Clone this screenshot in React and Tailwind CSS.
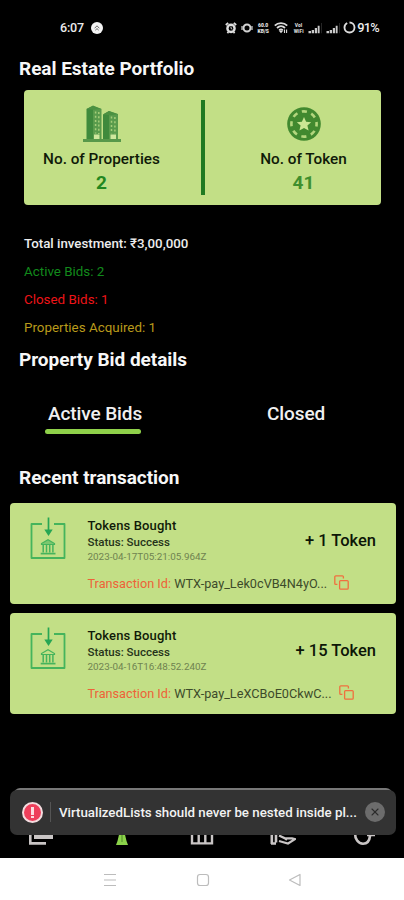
import { X } from 'lucide-react';

const transactions = [
  { id: 'WTX-pay_Lek0cVB4N4yO...', date: '2023-04-17T05:21:05.964Z', amount: '+ 1 Token', filled: true },
  { id: 'WTX-pay_LeXCBoE0CkwC...', date: '2023-04-16T16:48:52.240Z', amount: '+ 15 Token', filled: false },
];

function AlarmIcon() {
  return (
    <svg viewBox="0 0 12 12" className="w-3 h-3 shrink-0" fill="none" stroke="#dedede">
      <circle cx="6" cy="6.4" r="3.6" strokeWidth="2.4" />
      <path d="M.8 3 3.2.9M11.2 3 8.800.9M2.400 11.200l1-1.200M9.600 11.200l-1-1.200" strokeWidth="1.8" />
      <path d="M6 4.600v1.900l1.400.7" strokeWidth="0.9" />
    </svg>
  );
}

function SignalIcon() {
  return (
    <svg viewBox="0 0 14 12" className="w-[14px] h-3 shrink-0" fill="#cacaca">
      <path d="M.5 9H3v2.200H.5zM3.700 8H6v3.200H3.700zM6.800 6H9v5.200H6.800zM9.700 3.800h1.900v7.400H9.700z" />
      <path d="M13.100 1h.8v10.200h-.8z" fill="#303030" />
    </svg>
  );
}

function StatusBar() {
  return (
    <div className="h-[55px] shrink-0 flex items-center justify-between pl-[60px] pr-[25px] text-[#ececec]">
      <div className="flex items-center gap-[7px]">
        <span className="text-[12.5px] leading-4 font-medium tracking-[-0.2px]">6:07</span>
        <svg viewBox="0 0 12 12" className="w-3 h-3">
          <circle cx="6" cy="6" r="6" fill="#f4f4f4" />
          <path d="M3.600 6.300 6 3.800l2.400 2.500M4.300 8.200 6 6.600l1.700 1.600" fill="none" stroke="#6a6a6a" strokeWidth="1" />
        </svg>
      </div>
      <div className="flex items-center">
        <AlarmIcon />
        <svg viewBox="0 0 12 12" className="w-3 h-3 ml-1" fill="none" stroke="#d2d2d2">
          <circle cx="6" cy="6" r="3.500" strokeWidth="2" />
          <path d="M1 4v4M11 4v4" strokeWidth="1.200" />
        </svg>
        <div className="ml-[3px] w-[14px] h-3 flex flex-col text-[5px] leading-[6px] font-black text-center text-[#e4e4e4]">
          <span>60.0</span>
          <span>KB/S</span>
        </div>
        <svg viewBox="0 0 14 12" className="w-[14px] h-3 ml-1" fill="none" stroke="#dcdcdc" strokeWidth="1.8">
          <path d="M.8 3.600C4 .4 10 .4 13.200 3.600M3 6c2.400-2.400 5.600-2.400 8 0M5.200 8.200c1.200-1.100 2.400-1.100 3.600 0" />
          <path d="M7 10.400 5.800 9h2.400zM10.500 7.500v3.500M12.600 7.500v3.500" strokeWidth="1.100" />
        </svg>
        <div className="ml-[4px] w-[13px] h-3 flex flex-col text-[5px] leading-[6px] font-black text-center text-[#cfcfcf]">
          <span>VoI</span>
          <span>WiFi</span>
        </div>
        <span className="ml-[3px] flex"><SignalIcon /></span>
        <span className="ml-[4px] flex"><SignalIcon /></span>
        <svg viewBox="0 0 14 14" className="w-[13px] h-[13px] ml-[3px]" fill="none">
          <circle cx="7" cy="7" r="5.400" stroke="#dcdcdc" strokeWidth="2" strokeDasharray="30.500 3.400" transform="rotate(-90 7 7)" />
        </svg>
        <span className="ml-px text-[12.8px] leading-4 font-medium tracking-[-0.7px]">91%</span>
      </div>
    </div>
  );
}

function BuildingsIcon() {
  return (
    <svg viewBox="0 0 38 38" className="w-[38px] h-[38px]">
      <path d="M0 34h38v3H0z" fill="#57984a" />
      <path d="M3.500 4 10 1v33H3.500z" fill="#3f8a3c" />
      <path d="M10 1l8.500 3V34H10z" fill="#599b4c" />
      <path d="M3.500 4 10 .5 18.500 4 11 4.800z" fill="#4b9142" />
      <path d="M20 9.500 26 6v28h-6z" fill="#3f8a3c" />
      <path d="M26 6l9 3v25h-9z" fill="#599b4c" />
      <path d="M20 9.500 26 6l9 3.200-8 1z" fill="#4b9142" />
      <path d="M12.600 6.500v22M15.800 7v22" stroke="#a5cd79" strokeWidth="1.500" strokeDasharray="2 2.200" />
      <path d="M28.500 11.500v17M31.900 12v17" stroke="#a5cd79" strokeWidth="1.500" strokeDasharray="2 2.200" />
      <path d="M11 29.500h5.500V34H11zM27.500 29.500H33V34h-5.500z" fill="#cfe79d" />
    </svg>
  );
}

function TokenIcon() {
  return (
    <svg viewBox="0 0 34 34" className="w-[34px] h-[34px] mt-0.5">
      <circle cx="17" cy="17" r="16.800" fill="#41892f" />
      <circle cx="17" cy="17" r="12.600" fill="none" stroke="#b3d67d" strokeWidth="2.600" strokeDasharray="5.200 4.696" strokeDashoffset="2.600" />
      <path d="m17 10 2.100 4.700 5.100.5-3.800 3.400 1.200 5-4.600-2.600-4.600 2.600 1.200-5-3.800-3.400 5.100-.5z" fill="#cbe694" />
    </svg>
  );
}

function DepositIcon({ filled }) {
  return (
    <svg viewBox="0 0 36 43" className="w-9 h-[43px] shrink-0" fill="none" stroke="#45b45c">
      <path d="M12 7H1.500v34h33V7H24" strokeWidth="1.800" strokeLinejoin="round" />
      <path d="M18.500.5v14" stroke="#27a654" strokeWidth="1.700" />
      <path d="M14.300 12.500h8.400L18.500 19z" fill="#27a654" stroke="none" />
      <path d="M11.500 27.500v-1l6.500-3.700 6.500 3.700v1z" strokeWidth="1.200" fill={filled ? '#7cc76e' : 'none'} />
      <path d="M13.200 28v7.500M16.500 28v7.500M19.700 28v7.500M22.900 28v7.500" strokeWidth="1.500" />
      <path d="M10.700 36.600h14.800" strokeWidth="1.700" />
    </svg>
  );
}

function CopyIcon() {
  return (
    <svg viewBox="0 0 15 15" className="w-[15px] h-[15px] shrink-0" fill="none" stroke="#f0703f" strokeWidth="1.300">
      <rect x="5.600" y="5.600" width="8.600" height="8.600" rx="1" />
      <path d="M3.400 9.400H1.800a1 1 0 0 1-1-1V1.800a1 1 0 0 1 1-1h6.600a1 1 0 0 1 1 1v1.600" />
    </svg>
  );
}

function Stat({ icon, label, value, className, valueClass }) {
  return (
    <div className={`flex-1 flex flex-col items-center pt-[15px] ${className}`}>
      <div className="h-[44px]">{icon}</div>
      <p className="text-[15.300px] leading-5 font-medium text-[#0f1a08] whitespace-nowrap">{label}</p>
      <p className={`mt-1 text-[19px] leading-5 font-bold ${valueClass}`}>{value}</p>
    </div>
  );
}

function SectionTitle({ className, children }) {
  return (
    <h2 className={`ml-[19px] h-7 shrink-0 text-[19px] leading-7 font-bold tracking-[-0.030px] text-[#f7f7f7] whitespace-nowrap ${className}`}>
      {children}
    </h2>
  );
}

function TransactionCard({ tx }) {
  return (
    <div className="h-[101px] shrink-0 rounded-[4px] bg-[#c2df86] flex pl-5 pr-5">
      <div className="pt-[14px]">
        <DepositIcon filled={tx.filled} />
      </div>
      <div className="flex-1 ml-[21.500px] pt-[15px] whitespace-nowrap">
        <div className="flex justify-between">
          <div>
            <p className="text-[13px] leading-4 font-medium text-[#101a08] tracking-[0.150px]">Tokens Bought</p>
            <p className="text-[11.500px] leading-[17px] font-medium text-[#26331a]">Status: Success</p>
            <p className="text-[9.900px] leading-3 text-[#6f8350]">{tx.date}</p>
          </div>
          <p className="pt-[13px] text-[16.500px] leading-5 font-medium text-[#0d1607]">{tx.amount}</p>
        </div>
        <div className="mt-[13px] flex items-center h-4">
          <p className="text-[12.700px] leading-4 text-[#3d4b2a]">
            <span className="text-[#ee6238]">Transaction Id:</span> {tx.id}
          </p>
          <span className="ml-[7px] -mt-[3px]"><CopyIcon /></span>
        </div>
      </div>
    </div>
  );
}

function TabBar() {
  return (
    <div className="h-[68px] shrink-0 bg-black flex justify-around items-end pb-[13px]">
      <svg viewBox="0 0 26 24" className="w-[26px] h-6" fill="none" stroke="#c9c5c5" strokeWidth="2.600">
        <path d="M2.300 5v17.400H18" />
        <path d="M6 2h19v16H6z" fill="#c9c5c5" stroke="none" />
      </svg>
      <svg viewBox="0 0 24 24" className="w-6 h-6" fill="#8bd34a">
        <path d="M12 1 7.500 20 6 24h12l-1.500-4z" />
        <path d="M11.500 14h1v7h-1z" fill="#4f8a26" />
      </svg>
      <svg viewBox="0 0 24 24" className="w-6 h-6" fill="none" stroke="#c9c5c5" strokeWidth="2.400">
        <path d="M2 3v19.400h20V3M8.700 8v14M15.300 8v14" />
      </svg>
      <svg viewBox="0 0 26 24" className="w-[26px] h-6" fill="none" stroke="#c9c5c5" strokeWidth="2.200">
        <path d="M1.800 12v11M6 12v9.500M1 22.500h5" strokeWidth="2.600" />
        <path d="M9 14.500l6 2.800h7l3 .8-7 4.400-9-2.500M15 17.300l2 1.600" />
      </svg>
      <svg viewBox="0 0 24 24" className="w-6 h-6" fill="none" stroke="#c9c5c5" strokeWidth="2.600">
        <path d="M3 12c0 6 3 10.700 8 10.700 4.500 0 6.500-3 7-7.700M15 14h8" />
      </svg>
    </div>
  );
}

function WarningToast() {
  return (
    <div className="absolute left-[10px] top-[788px] w-[386px] h-[47px] px-1">
      <div className="h-[6px] rounded-t-md bg-[#777]" />
      <div className="absolute inset-x-0 top-[2px] bottom-0 rounded-[7px] bg-[#333] flex items-center pl-3 pr-[11px] pb-px">
        <div className="w-[21px] h-[21px] shrink-0 rounded-full border-2 border-[#f4dcdf] bg-[#ee3f5b] flex flex-col items-center justify-center gap-px">
          <span className="w-[3px] h-2 bg-[#fbdde1]" />
          <span className="w-[3px] h-[2px] bg-[#fbdde1]" />
        </div>
        <span className="w-px h-5 ml-[7px] bg-[#555]" />
        <p className="mt-px ml-2 flex-1 text-[13.300px] leading-5 font-medium text-[#f2f2f2] whitespace-nowrap">
          VirtualizedLists should never be nested inside pl...
        </p>
        <div className="w-5 h-5 shrink-0 rounded-full bg-[#6c6c6c] flex items-center justify-center">
          <X className="w-3 h-3 text-[#2c2c2c]" strokeWidth={2.2} />
        </div>
      </div>
    </div>
  );
}

function SystemNav() {
  return (
    <div className="h-[42px] shrink-0 bg-white">
      <svg viewBox="0 0 404 42" className="w-full h-[42px]" fill="none" stroke="#bcbcbc" strokeWidth="1.200">
        <path d="M104 16.500h12M104 22h12M104 27.500h12" />
        <rect x="197.500" y="16.500" width="11" height="11" rx="2.500" />
        <path d="M289.500 22 300 16.500v11z" strokeLinejoin="round" />
      </svg>
    </div>
  );
}

export default function App() {
  return (
    <div className="relative w-[404px] h-[900px] overflow-hidden bg-black flex flex-col font-['Roboto',sans-serif]">
      <StatusBar />
      <SectionTitle className="">Real Estate Portfolio</SectionTitle>

      <section className="mt-[7px] ml-6 w-[357px] h-[115px] shrink-0 rounded-[4px] bg-[#c2df86] flex">
        <Stat icon={<BuildingsIcon />} label="No. of Properties" value="2" className="pr-[22px]" valueClass="text-[#23881f]" />
        <div className="w-[4px] h-[95px] mt-[10px] bg-[#1f7a22]" />
        <Stat icon={<TokenIcon />} label="No. of Token" value="41" className="pl-[21px]" valueClass="text-[#3f8f2e]" />
      </section>

      <div className="mt-[25px] ml-6 shrink-0 text-[13.400px] leading-7 whitespace-nowrap">
        <p className="text-[13.300px] font-medium text-[#ededed]">Total investment: ₹3,00,000</p>
        <p className="text-[#128a1c]">Active Bids: 2</p>
        <p className="text-[#ee1418]">Closed Bids: 1</p>
        <p className="text-[#b99a1b]">Properties Acquired: 1</p>
      </div>

      <SectionTitle className="mt-[4px]">Property Bid details</SectionTitle>

      <div className="mt-[26px] h-[36px] shrink-0 flex text-[19px] leading-7 font-medium tracking-[-0.100px] text-[#f0f0f0] whitespace-nowrap">
        <div className="ml-[45px] w-24">
          <p className="ml-[3px]">Active Bids</p>
          <div className="mt-px h-[5px] rounded-sm bg-[#8fd14a]" />
        </div>
        <p className="ml-[126px]">Closed</p>
      </div>

      <SectionTitle className="mt-[28px]">Recent transaction</SectionTitle>

      <div className="mt-[11px] ml-[10px] w-[386px] flex-1 flex flex-col gap-[9px]">
        {transactions.map((tx) => (
          <TransactionCard key={tx.id} tx={tx} />
        ))}
      </div>

      <TabBar />
      <WarningToast />
      <SystemNav />
    </div>
  );
}
